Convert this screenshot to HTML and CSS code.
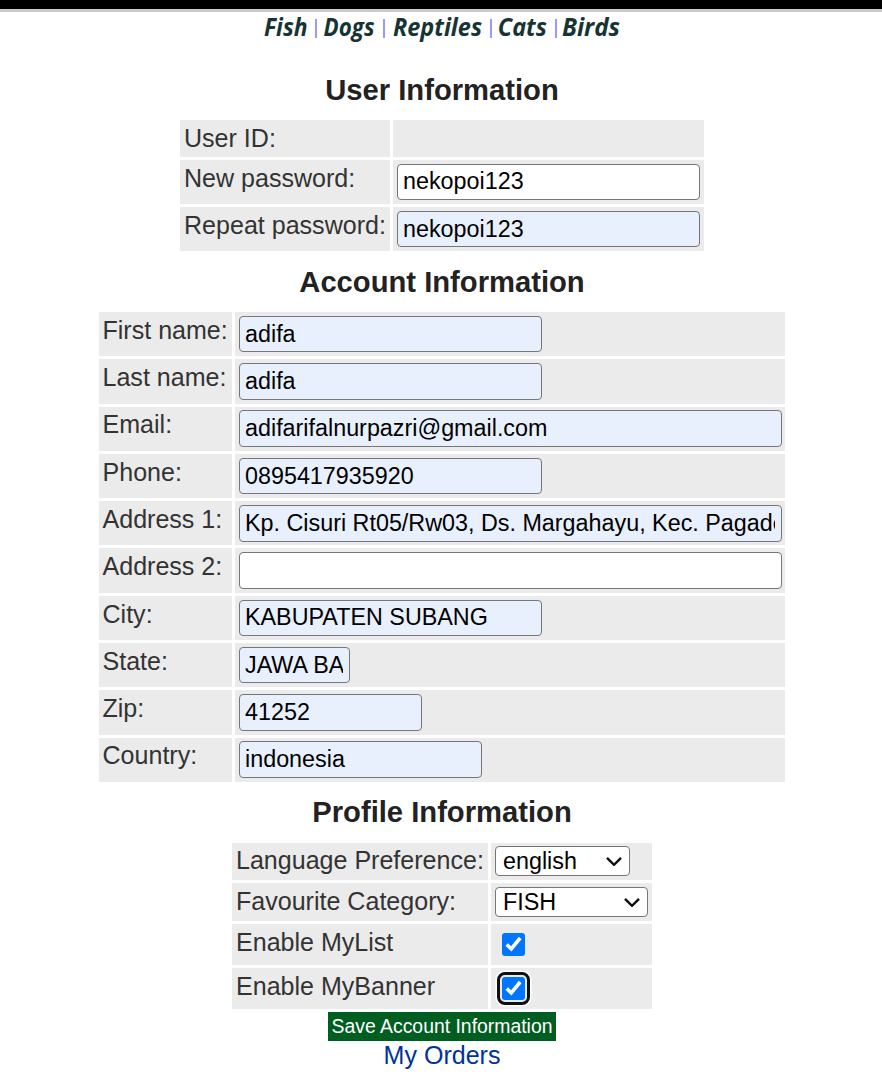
FILE: index.html
```html
<!DOCTYPE html>
<html lang="en">
<head>
<meta charset="utf-8">
<title>Account Information</title>
<link rel="stylesheet" href="styles.css">
</head>
<body>
<div class="topbar"></div>
<nav class="quicklinks">
  <svg class="link" width="44" height="32"><text x="0" y="24" textLength="43.5" lengthAdjust="spacingAndGlyphs">Fish</text></svg>
  <i class="sep"></i>
  <svg class="link" width="52" height="32"><text x="-0.5" y="24" textLength="51" lengthAdjust="spacingAndGlyphs">Dogs</text></svg>
  <i class="sep"></i>
  <svg class="link" width="91" height="32"><text x="1" y="24" textLength="89" lengthAdjust="spacingAndGlyphs">Reptiles</text></svg>
  <i class="sep"></i>
  <svg class="link" width="49" height="32"><text x="-1.2" y="24" textLength="49" lengthAdjust="spacingAndGlyphs">Cats</text></svg>
  <i class="sep"></i>
  <svg class="link" width="56" height="32"><text x="-2" y="24" textLength="58" lengthAdjust="spacingAndGlyphs">Birds</text></svg>
</nav>
<form class="page">
  <h3>User Information</h3>
  <div class="grid user">
    <div class="cell">User ID:</div><div class="cell"></div>
    <div class="cell">New password:</div><div class="cell"><input class="plain raised" value="nekopoi123"></div>
    <div class="cell">Repeat password:</div><div class="cell"><input value="nekopoi123"></div>
  </div>
  <h3>Account Information</h3>
  <div class="grid account">
    <div class="cell">First name:</div><div class="cell"><input value="adifa"></div>
    <div class="cell">Last name:</div><div class="cell"><input class="tall" value="adifa"></div>
    <div class="cell snug">Email:</div><div class="cell snug"><input class="tall wide" value="adifarifalnurpazri@gmail.com"></div>
    <div class="cell">Phone:</div><div class="cell"><input value="0895417935920"></div>
    <div class="cell">Address 1:</div><div class="cell"><input class="tall wide" value="Kp. Cisuri Rt05/Rw03, Ds. Margahayu, Kec. Pagaden"></div>
    <div class="cell">Address 2:</div><div class="cell"><input class="tall wide plain" value=""></div>
    <div class="cell">City:</div><div class="cell"><input class="raised" value="KABUPATEN SUBANG"></div>
    <div class="cell">State:</div><div class="cell"><input class="state" value="JAWA BARAT"></div>
    <div class="cell">Zip:</div><div class="cell"><input class="tall zip" value="41252"></div>
    <div class="cell snug">Country:</div><div class="cell snug"><input class="tall country" value="indonesia"></div>
  </div>
  <h3 class="profile-title">Profile Information</h3>
  <div class="grid profile">
    <div class="cell snug">Language Preference:</div>
    <div class="cell snug"><div class="select language">english<svg width="16" height="10" viewBox="0 0 16 10"><path d="M1 1.8 8 8.8 15 1.8"/></svg></div></div>
    <div class="cell">Favourite Category:</div>
    <div class="cell"><div class="select category">FISH<svg width="16" height="10" viewBox="0 0 16 10"><path d="M1 1.8 8 8.8 15 1.8"/></svg></div></div>
    <div class="cell">Enable MyList</div>
    <div class="cell"><div class="check"><svg width="23" height="23" viewBox="0 0 23 23"><path d="M4.8 11.4 9.3 15.9 18.2 5"/></svg></div></div>
    <div class="cell">Enable MyBanner</div>
    <div class="cell"><div class="check focused"><svg width="23" height="23" viewBox="0 0 23 23"><path d="M4.8 11.4 9.3 15.9 18.2 5"/></svg></div></div>
  </div>
  <button type="button" class="save">Save Account Information</button>
  <a class="orders">My Orders</a>
</form>
</body>
</html>
```
FILE: styles.css
```css
* { box-sizing: border-box; }
body {
  margin: 0;
  height: 1077px;
  overflow: hidden;
  background: #fff;
  color: #333;
  font: 25.06px/29px "Liberation Sans", Arial, sans-serif;
}
.topbar { height: 12px; background: #000; border-bottom: 3px solid #ccc; }
.quicklinks {
  display: flex;
  justify-content: center;
  align-items: flex-start;
  height: 62px;
  padding-left: 2px;
}
.link { overflow: visible; }
.link text {
  font: italic bold 24.5px "Open Sans", sans-serif;
  fill: #173434;
}
.sep { width: 2px; height: 19px; margin: 7px 7px 0; background: #99f; }
.page {
  display: flex;
  flex-direction: column;
  align-items: center;
  padding-left: 2px;
}
h3 {
  margin: 0 0 13px;
  font-size: 29.2px;
  line-height: 33px;
  font-weight: bold;
  color: #222;
}
.grid + h3 { margin-top: 15px; }
.grid + .profile-title { margin: 14px 0; }
.grid { display: grid; gap: 3px; }
.user { grid-template: 37px 44px 44px / 210px 311px; }
.account { grid-template: 44px 45px 44px 44px 44px 45px 44px 44px 45px 44px / 133px 550px; }
.profile { grid-template: 37px 38px 41px 41px / 256px 161px; }
.cell { padding: 4px; background: #ebebeb; white-space: nowrap; }
.account .cell { padding-left: 3.5px; }
.account .cell:nth-child(even) { padding-left: 4px; }
.cell.snug { padding-top: 3px; }
input {
  display: block;
  width: 303px;
  height: 36px;
  margin: 0;
  padding: 0 6px 0 5px;
  border: 1px solid #767676;
  border-radius: 4px;
  background: #e8f0fe;
  color: #000;
  font: 23.33px "Liberation Sans", Arial, sans-serif;
}
input.plain { background: #fff; }
input.raised { padding-bottom: 2px; }
input.tall { height: 37px; }
input.wide { width: 543px; }
input.state { width: 111px; }
input.zip { width: 183px; }
input.country { width: 243px; }
.select {
  display: flex;
  align-items: center;
  justify-content: space-between;
  height: 30px;
  padding: 0 7px;
  border: 1px solid #767676;
  border-radius: 4px;
  background: #fff;
  color: #000;
  font-size: 23.33px;
  line-height: 28px;
}
.language { width: 135px; }
.category { width: 153px; }
.select path { fill: none; stroke: #101010; stroke-width: 2.4; }
.check {
  width: 23px;
  height: 23px;
  margin: 5px 0 0 7px;
  border-radius: 3px;
  background: #0075ff;
}
.check svg { display: block; }
.check path { fill: none; stroke: #fff; stroke-width: 3.6; }
.focused {
  outline: 3px solid #101010;
  outline-offset: 2px;
  box-shadow: 0 0 0 2px #ebebeb, 0 0 0 6.5px #fff;
}
.save {
  width: 228px;
  height: 29px;
  margin: 3px 0 0;
  padding: 0;
  border: 0;
  background: #005e21;
  color: #fff;
  font: 19.4px/29px "Liberation Sans", Arial, sans-serif;
  white-space: nowrap;
}
.orders { color: #039; }
```
